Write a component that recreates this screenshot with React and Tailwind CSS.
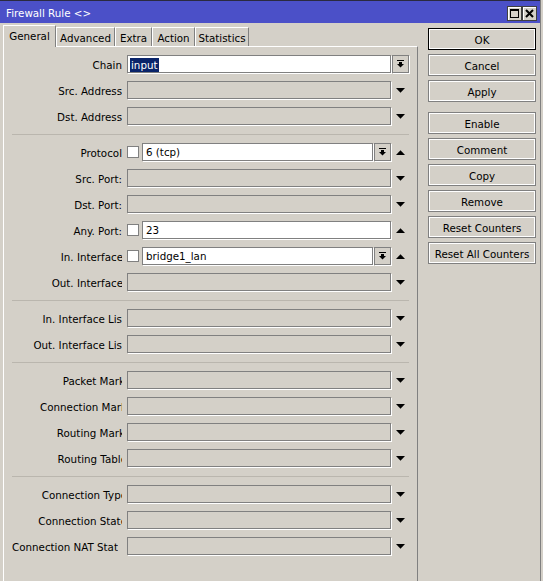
import React from 'react'

const rows = [
  { label: 'Chain', kind: 'combo', value: 'input', selected: true },
  { label: 'Src. Address', kind: 'down' },
  { label: 'Dst. Address', kind: 'down' },
  'sep',
  { label: 'Protocol', kind: 'checkCombo', value: '6 (tcp)' },
  { label: 'Src. Port:', kind: 'down' },
  { label: 'Dst. Port:', kind: 'down' },
  { label: 'Any. Port:', kind: 'checkText', value: '23' },
  { label: 'In. Interface', shift: 'mr-[-1px]', kind: 'checkCombo', value: 'bridge1_lan' },
  { label: 'Out. Interface', shift: 'mr-[-1px]', kind: 'down' },
  'sep',
  { label: 'In. Interface List', shift: 'mr-[-4px]', kind: 'down' },
  { label: 'Out. Interface List', shift: 'mr-[-4px]', kind: 'down' },
  'sep',
  { label: 'Packet Mark', shift: 'mr-[-3px]', kind: 'down' },
  { label: 'Connection Mark', shift: 'mr-[-5px]', kind: 'down' },
  { label: 'Routing Mark', shift: 'mr-[-3px]', kind: 'down' },
  { label: 'Routing Table', shift: 'mr-[-5px]', kind: 'down' },
  'sep',
  { label: 'Connection Type', shift: 'mr-[-5px]', kind: 'down' },
  { label: 'Connection State', shift: 'mr-[-5px]', kind: 'down' },
  { label: 'Connection NAT State', box: 'w-[106px] mr-[9px]', kind: 'down' },
]

const tabs = [
  { name: 'General', w: 'w-[53px]' },
  { name: 'Advanced', w: 'w-[59px]' },
  { name: 'Extra', w: 'w-[37px]' },
  { name: 'Action', w: 'w-[43px]' },
  { name: 'Statistics', w: 'w-[54px]' },
]

const buttons = ['OK', 'Cancel', 'Apply', 'Enable', 'Comment', 'Copy', 'Remove', 'Reset Counters', 'Reset All Counters']

function DownTri() {
  return (
    <svg width="9" height="5" viewBox="0 0 9 5" className="block">
      <path d="M0 0H9L4.5 4.8Z" fill="#000" />
    </svg>
  )
}

function UpTri() {
  return (
    <svg width="9" height="5" viewBox="0 0 9 5" className="block">
      <path d="M4.5 0.2L9 5H0Z" fill="#000" />
    </svg>
  )
}

function ArrowSlot({ up }) {
  return (
    <div className="ml-[1px] w-[17px] h-[18px] flex items-center justify-center">
      {up ? <UpTri /> : <DownTri />}
    </div>
  )
}

function DropButton() {
  return (
    <div className="ml-[1px] w-[17px] h-[18px] border border-[#808080] shadow-[1px_1px_0_#fff] bg-[#d4d0c8] flex items-center justify-center">
      <svg width="7" height="8" viewBox="0 0 7 8" className="block">
        <rect x="0" y="0" width="7" height="1" fill="#000" />
        <rect x="2" y="2" width="3" height="2" fill="#000" />
        <path d="M0 4H7L3.5 7.5Z" fill="#000" />
      </svg>
    </div>
  )
}

function Field({ className, white, children }) {
  return (
    <div
      className={`h-[18px] border border-[#808080] shadow-[1px_1px_0_#fff] flex items-center pl-[2px] pt-[1px] overflow-hidden whitespace-nowrap ${white ? 'bg-white' : 'bg-[#d4d0c8]'} ${className}`}
    >
      {children}
    </div>
  )
}

function Check() {
  return <div className="w-[12px] h-[12px] mr-[3px] border border-[#808080] bg-white shrink-0" />
}

function Row({ row }) {
  const { label, shift, box, kind, value, selected } = row
  return (
    <div className="h-[26px] flex items-start">
      <div className="h-[18px] flex items-center">
        <div className={`${box || 'w-[110px] mr-[5px]'} h-[18px] text-right overflow-hidden whitespace-nowrap leading-[20px]`}>
          <span className={shift || ''}>{label}</span>
        </div>
        {kind === 'combo' && (
          <>
            <Field white className="w-[264px]">
              {selected ? <span className="bg-[#0a246a] text-white px-[1px] leading-[14px]">{value}</span> : value}
            </Field>
            <DropButton />
          </>
        )}
        {kind === 'down' && (
          <>
            <Field className="w-[264px]" />
            <ArrowSlot />
          </>
        )}
        {kind === 'checkCombo' && (
          <>
            <Check />
            <Field white className="w-[231px]">
              <span className="pl-[1px]">{value}</span>
            </Field>
            <DropButton />
            <ArrowSlot up />
          </>
        )}
        {kind === 'checkText' && (
          <>
            <Check />
            <Field white className="w-[249px]">
              <span className="pl-[1px]">{value}</span>
            </Field>
            <ArrowSlot up />
          </>
        )}
      </div>
    </div>
  )
}

export default function App() {
  return (
    <div className="w-[543px] h-[581px] overflow-hidden bg-[#d4d0c8] flex text-black text-[10.3px] font-['DejaVu_Sans',sans-serif]">
      <div className="w-[541px] h-full flex flex-col border-r border-[#808080]">
        {/* title bar */}
        <div className="h-[23px] shrink-0 bg-[#4b50c8] border-t border-[#2a2a40] flex items-center pl-[6px] pr-[3px] pt-[2px] text-white">
          <span className="leading-none">Firewall Rule &lt;&gt;</span>
          <div className="ml-auto flex">
            <div className="w-[15px] h-[15px] bg-[#d4d0c8] border border-[#404040] shadow-[inset_1px_1px_0_#fff] flex items-center justify-center">
              <div className="w-[9px] h-[9px] border border-black border-t-2" />
            </div>
            <div className="w-[15px] h-[15px] bg-[#d4d0c8] border border-[#404040] shadow-[inset_1px_1px_0_#fff] flex items-center justify-center">
              <svg width="9" height="9" viewBox="0 0 9 9" className="block">
                <path d="M1 1L8 8M8 1L1 8" stroke="#000" strokeWidth="2" />
              </svg>
            </div>
          </div>
        </div>

        <div className="flex-1 flex">
          {/* left: tabs + panel */}
          <div className="w-[418px] flex flex-col">
            <div className="h-[23px] shrink-0 flex items-end pl-[3px]">
              {tabs.map((t, i) =>
                i === 0 ? (
                  <div
                    key={t.name}
                    className={`${t.w} h-[22px] mb-[-1px] relative z-10 bg-[#d4d0c8] border-l border-t border-white border-r-[#808080] border-r flex items-center justify-center pt-[1px]`}
                  >
                    {t.name}
                  </div>
                ) : (
                  <div
                    key={t.name}
                    className={`${t.w} h-[19px] bg-[#d4d0c8] border-l border-t border-white border-r-[#808080] border-r flex items-center justify-center pt-[3px]`}
                  >
                    {t.name}
                  </div>
                )
              )}
            </div>
            <div className="flex-1 ml-[3px] border-t border-l border-white border-r border-r-[#808080] pt-[8px] pl-[8px]">
              {rows.map((r, i) =>
                r === 'sep' ? (
                  <div key={i} className="h-[10px] pt-[1px]">
                    <div className="w-[397px] h-px bg-[#bab6ae]" />
                  </div>
                ) : (
                  <Row key={i} row={r} />
                )
              )}
            </div>
          </div>

          {/* right: buttons */}
          <div className="flex-1 pt-[5px] pl-[10px] flex flex-col">
            {buttons.map((b, i) => (
              <div
                key={b}
                className={`w-[108px] h-[22px] shrink-0 flex items-center justify-center pt-[3px] whitespace-nowrap shadow-[inset_0_0_0_1px_#fff] border ${i === 0 ? 'border-black' : 'border-[#808080]'} ${i === 0 ? '' : i === 3 ? 'mt-[10px]' : 'mt-[4px]'}`}
              >
                {b}
              </div>
            ))}
          </div>
        </div>
      </div>
    </div>
  )
}
